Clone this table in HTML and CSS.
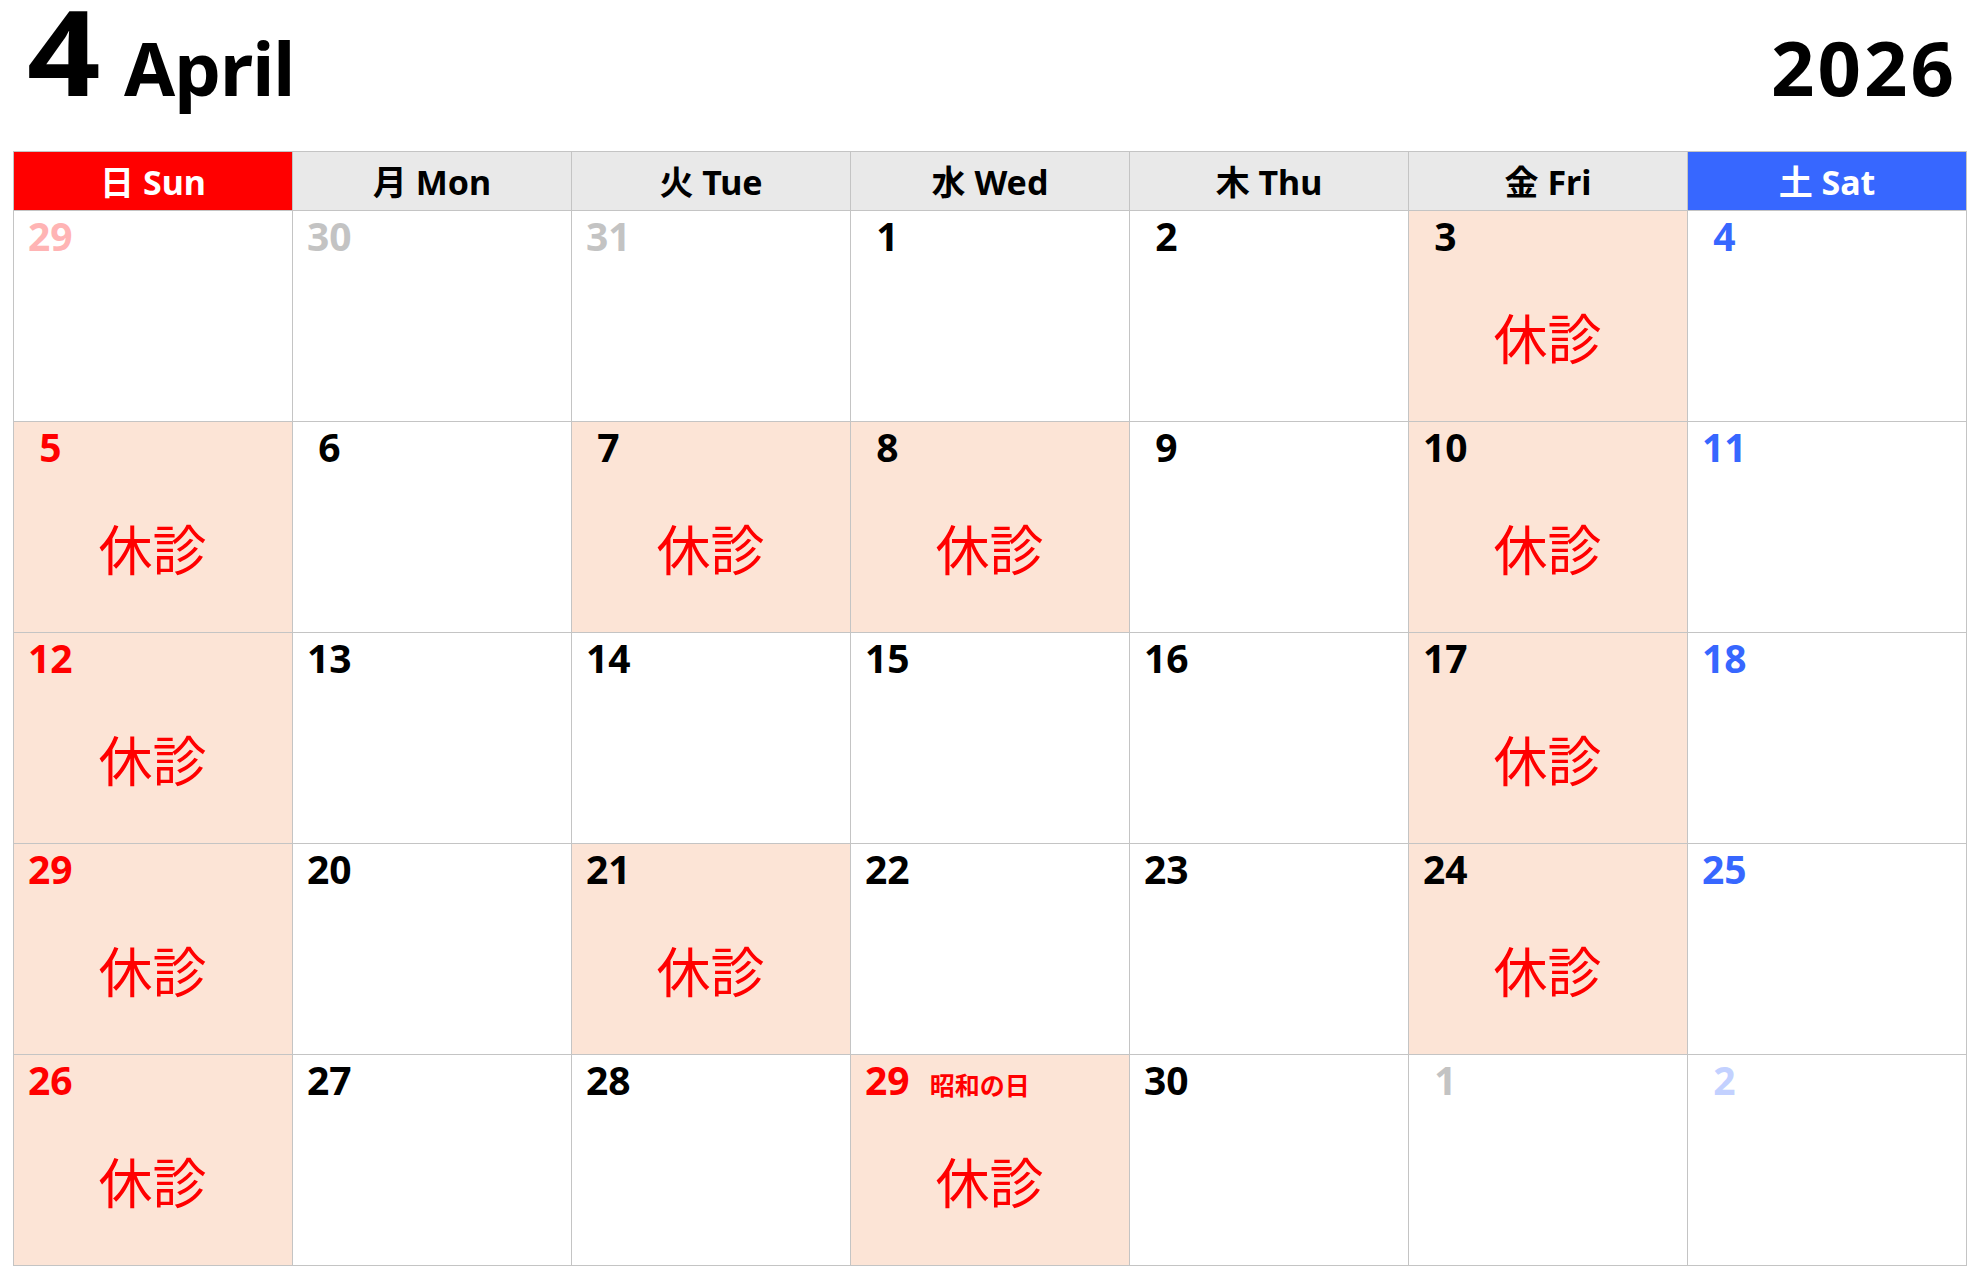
FILE: index.html
```html
<!DOCTYPE html>
<html lang="ja">
<head>
<meta charset="utf-8">
<title>2026 April</title>
<link rel="stylesheet" href="styles.css">
</head>
<body>
<div class="page">
  <div class="title">
    <div class="month">
      <span class="mnum">4</span><span class="mname">April</span>
    </div>
    <span class="year">2026</span>
  </div>
  <div class="cal">
    <div class="wd sun">日 Sun</div>
    <div class="wd">月 Mon</div>
    <div class="wd">火 Tue</div>
    <div class="wd">水 Wed</div>
    <div class="wd">木 Thu</div>
    <div class="wd">金 Fri</div>
    <div class="wd sat">土 Sat</div>

    <div class="day"><span class="num prev-sun">29</span></div>
    <div class="day"><span class="num prev">30</span></div>
    <div class="day"><span class="num prev">31</span></div>
    <div class="day"><span class="num">1</span></div>
    <div class="day"><span class="num">2</span></div>
    <div class="day closed"><span class="num">3</span><div class="off">休診</div></div>
    <div class="day"><span class="num blue">4</span></div>

    <div class="day closed"><span class="num red">5</span><div class="off">休診</div></div>
    <div class="day"><span class="num">6</span></div>
    <div class="day closed"><span class="num">7</span><div class="off">休診</div></div>
    <div class="day closed"><span class="num">8</span><div class="off">休診</div></div>
    <div class="day"><span class="num">9</span></div>
    <div class="day closed"><span class="num">10</span><div class="off">休診</div></div>
    <div class="day"><span class="num blue">11</span></div>

    <div class="day closed"><span class="num red">12</span><div class="off">休診</div></div>
    <div class="day"><span class="num">13</span></div>
    <div class="day"><span class="num">14</span></div>
    <div class="day"><span class="num">15</span></div>
    <div class="day"><span class="num">16</span></div>
    <div class="day closed"><span class="num">17</span><div class="off">休診</div></div>
    <div class="day"><span class="num blue">18</span></div>

    <div class="day closed"><span class="num red">29</span><div class="off">休診</div></div>
    <div class="day"><span class="num">20</span></div>
    <div class="day closed"><span class="num">21</span><div class="off">休診</div></div>
    <div class="day"><span class="num">22</span></div>
    <div class="day"><span class="num">23</span></div>
    <div class="day closed"><span class="num">24</span><div class="off">休診</div></div>
    <div class="day"><span class="num blue">25</span></div>

    <div class="day closed"><span class="num red">26</span><div class="off">休診</div></div>
    <div class="day"><span class="num">27</span></div>
    <div class="day"><span class="num">28</span></div>
    <div class="day closed"><span class="num red">29</span><span class="hol">昭和の日</span><div class="off">休診</div></div>
    <div class="day"><span class="num">30</span></div>
    <div class="day"><span class="num prev">1</span></div>
    <div class="day"><span class="num next-sat">2</span></div>
  </div>
</div>
</body>
</html>
```

FILE: styles.css
```css
* { box-sizing: border-box; }
html, body { margin: 0; padding: 0; background: #fff; }
body {
  font-family: "Noto Sans", "Noto Sans CJK JP", sans-serif;
  color: #000;
}
.page {
  width: 1975px;
  padding: 0 9px 0 13px;
}
.title {
  height: 151px;
  display: flex;
  justify-content: space-between;
  align-items: baseline;
  padding: 0 9px 0 14px;
  font-weight: bold;
}
.month { display: flex; align-items: baseline; }
.mnum { font-size: 119px; line-height: 100px; display: inline-block; transform: scaleX(1.08); transform-origin: left bottom; }
.mname { font-size: 74px; line-height: 100px; margin-left: 29px; letter-spacing: -1px; }
.year { font-size: 76px; line-height: 100px; letter-spacing: 3px; }

.cal {
  display: grid;
  grid-template-columns: repeat(7, 278px);
  grid-template-rows: 58px repeat(5, 210px);
  gap: 1px;
  padding: 1px;
  background: #c4c4c4;
  width: 1954px;
}
.wd {
  background: #e9e9e9;
  display: flex;
  align-items: center;
  justify-content: center;
  font-size: 34px;
  font-weight: bold;
  padding-bottom: 2px;
}
.wd.sun { background: #ff0000; color: #fff; }
.wd.sat { background: #3767ff; color: #fff; }

.day {
  background: #fff;
  padding: 2px 13px 0 14px;
}
.day.closed { background: #fce4d6; }
.num {
  display: inline-block;
  min-width: 1.144em;
  text-align: center;
  font-size: 39px;
  font-weight: bold;
  line-height: 45px;
}
.num.red { color: #ff0000; }
.num.blue { color: #3767ff; }
.num.prev { color: #c3c3c3; }
.num.prev-sun { color: #ffb4b4; }
.num.next-sat { color: #c3d1ff; }
.hol {
  font-size: 25px;
  font-weight: bold;
  color: #ff0000;
  margin-left: 20px;
  font-family: "Noto Sans CJK JP", sans-serif;
}
.off {
  margin: 52px 0 0 -2px;
  text-align: center;
  color: #ff0000;
  font-family: "Noto Sans CJK JP", sans-serif;
  font-size: 54px;
  line-height: 54px;
}
```
